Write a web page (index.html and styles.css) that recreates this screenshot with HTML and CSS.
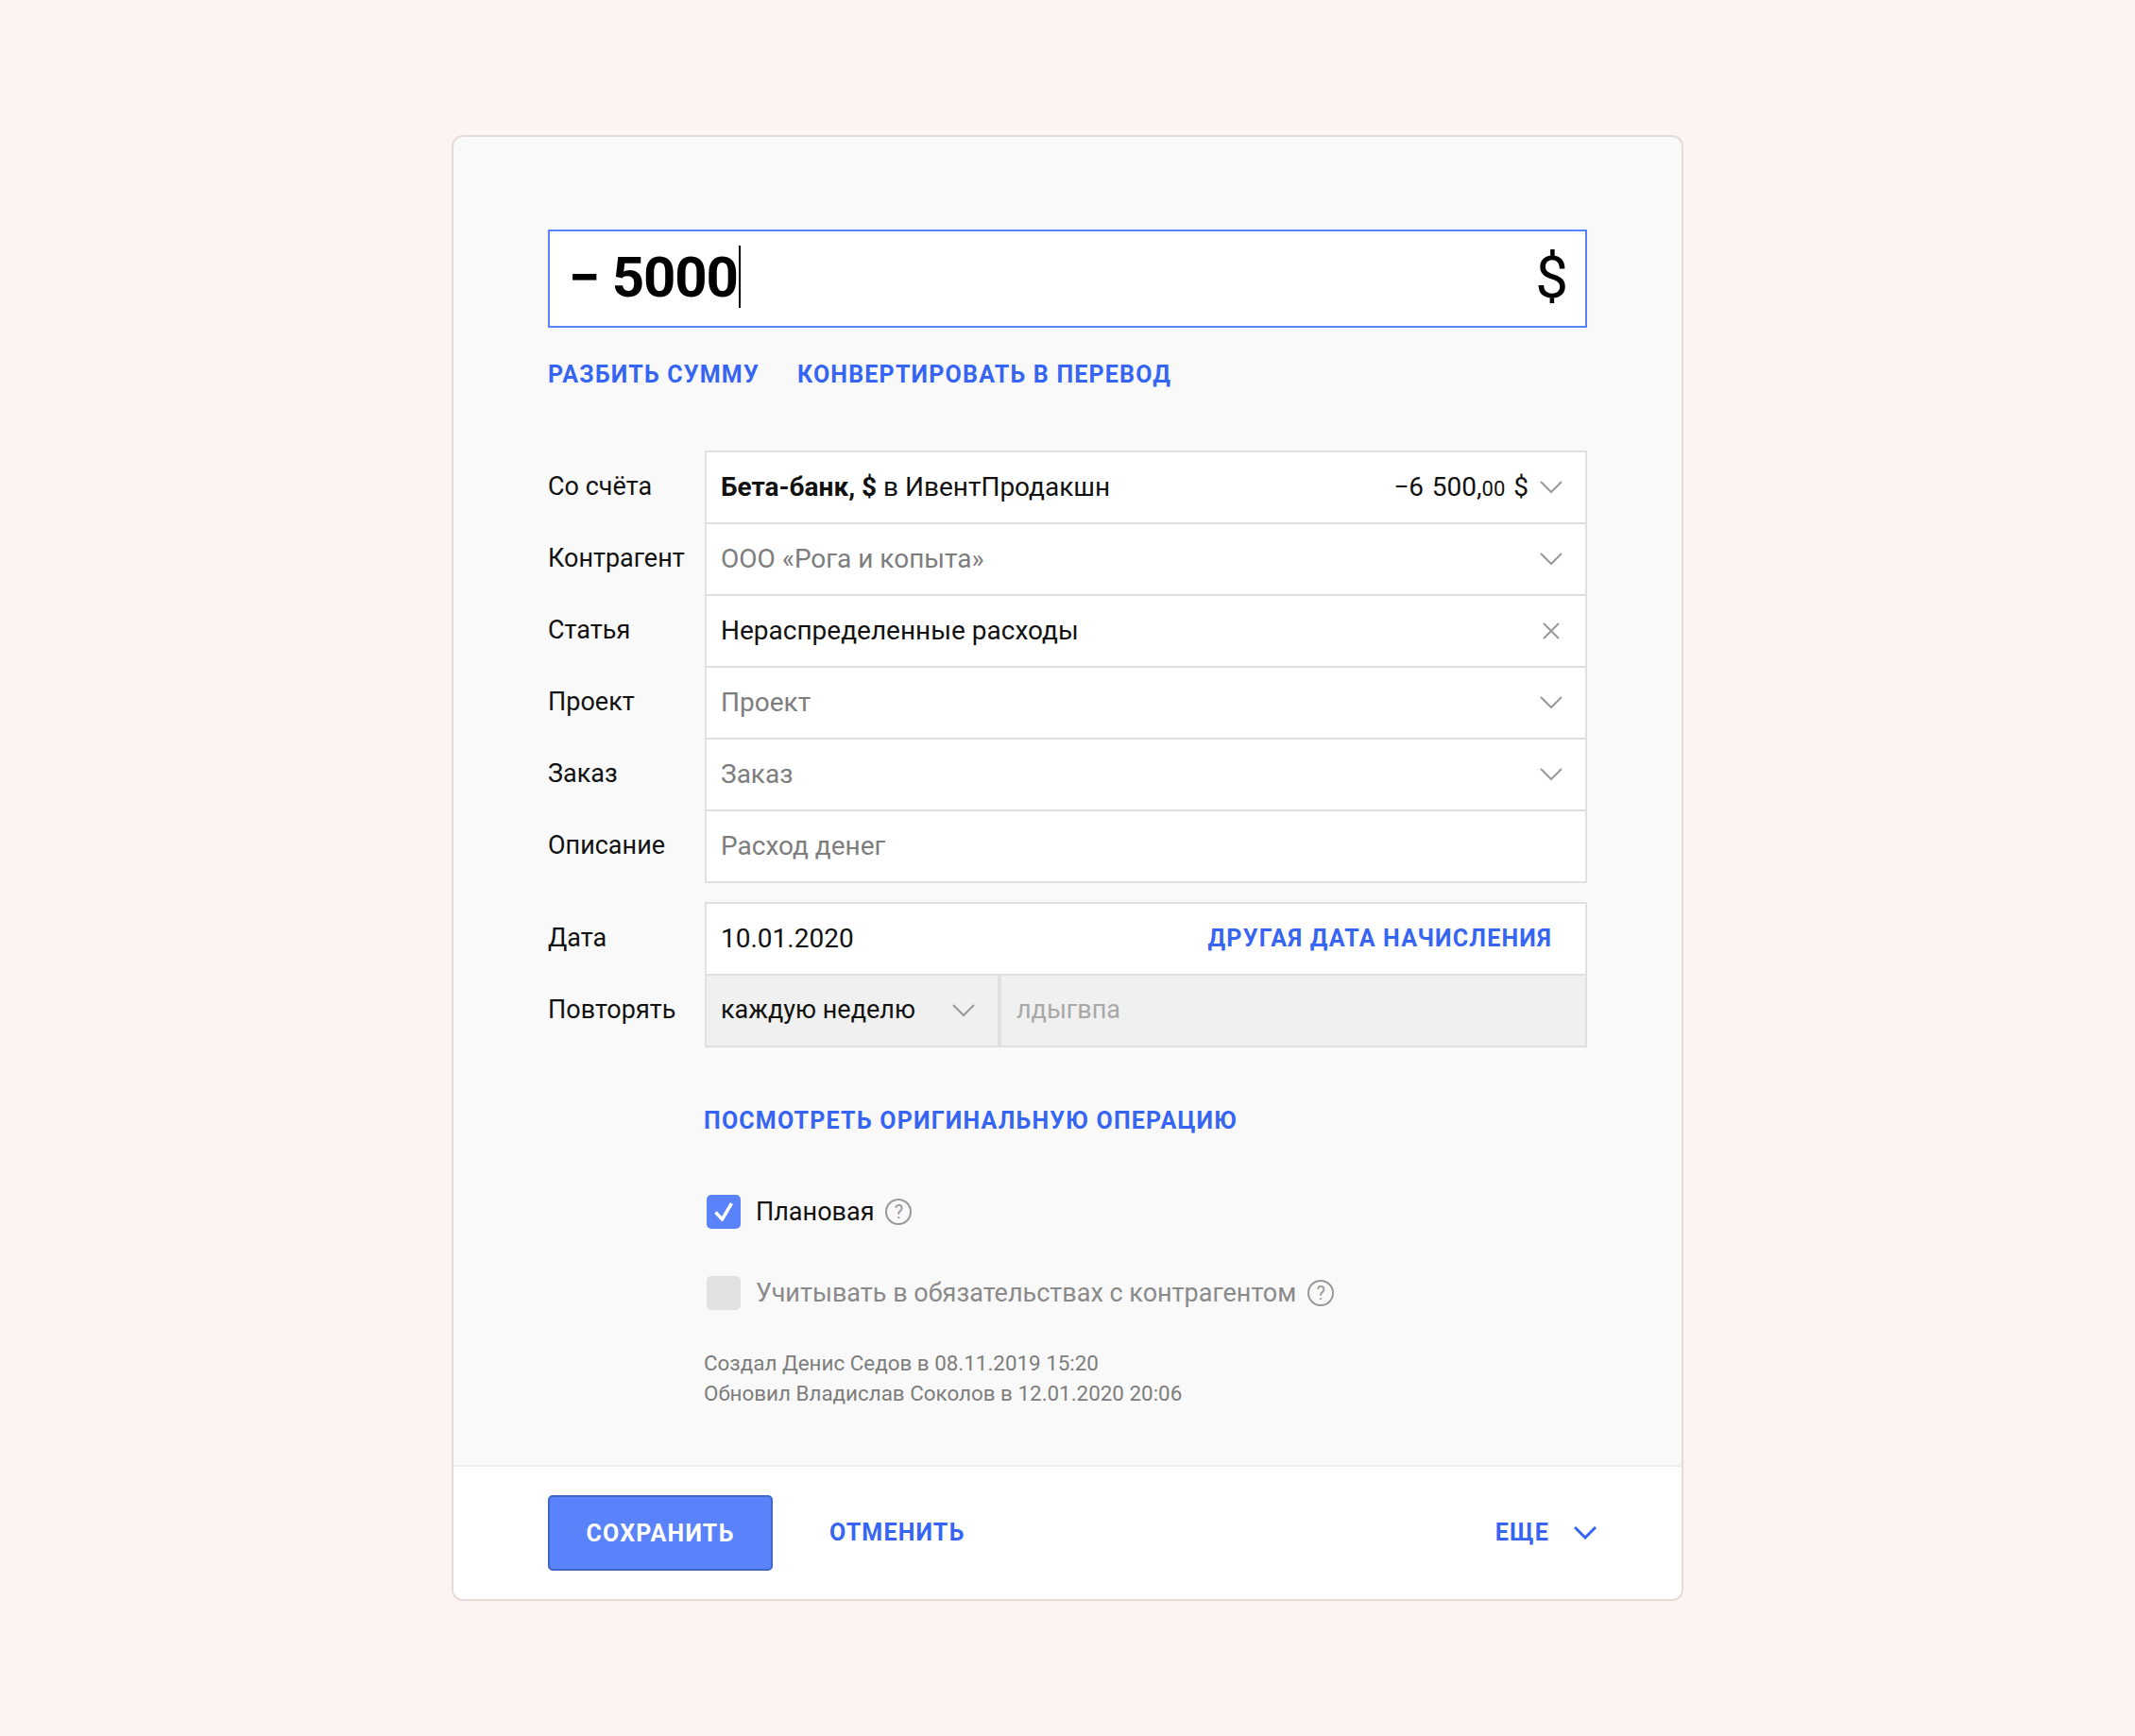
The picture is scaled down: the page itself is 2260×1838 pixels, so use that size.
FILE: index.html
```html
<!DOCTYPE html>
<html>
  <head>
    <meta charset="utf-8" />
    <title>Операция</title>
    <link rel="stylesheet" href="styles.css">
  </head>
  <body>
    <div class="card">
      <div class="card-body">
        <div class="amount">
          <span class="amount-value">&minus; 5000<span class="caret"></span></span>
          <span class="amount-cur">$</span>
        </div>
        <div class="links">
          <a class="link">Разбить сумму</a>
          <a class="link">Конвертировать в перевод</a>
        </div>

        <div class="rows">
          <div class="row">
            <label>Со счёта</label>
            <div class="field">
              <span class="val"><b>Бета-банк, $</b> в ИвентПродакшн</span>
              <span class="sum">−6 500,<small>00</small> $</span>
              <svg class="chev" viewBox="0 0 24 14"><path d="M1 1l11 11L23 1"/></svg>
            </div>
          </div>
          <div class="row">
            <label>Контрагент</label>
            <div class="field">
              <span class="val muted">ООО «Рога и копыта»</span>
              <svg class="chev" viewBox="0 0 24 14"><path d="M1 1l11 11L23 1"/></svg>
            </div>
          </div>
          <div class="row">
            <label>Статья</label>
            <div class="field">
              <span class="val">Нераспределенные расходы</span>
              <svg class="cross" viewBox="0 0 18 18"><path d="M1 1l16 16M17 1L1 17"/></svg>
            </div>
          </div>
          <div class="row">
            <label>Проект</label>
            <div class="field">
              <span class="val muted">Проект</span>
              <svg class="chev" viewBox="0 0 24 14"><path d="M1 1l11 11L23 1"/></svg>
            </div>
          </div>
          <div class="row">
            <label>Заказ</label>
            <div class="field">
              <span class="val muted">Заказ</span>
              <svg class="chev" viewBox="0 0 24 14"><path d="M1 1l11 11L23 1"/></svg>
            </div>
          </div>
          <div class="row">
            <label>Описание</label>
            <div class="field">
              <span class="val muted">Расход денег</span>
            </div>
          </div>
        </div>

        <div class="rows rows-date">
          <div class="row">
            <label>Дата</label>
            <div class="field">
              <span class="val">10.01.2020</span>
              <a class="link link-date">Другая дата начисления</a>
            </div>
          </div>
          <div class="row">
            <label>Повторять</label>
            <div class="field field-split">
              <div class="period">
                <span class="val">каждую неделю</span>
                <svg class="chev" viewBox="0 0 24 14"><path d="M1 1l11 11L23 1"/></svg>
              </div>
              <div class="period-value">лдыгвпа</div>
            </div>
          </div>
        </div>

        <div class="extra">
          <a class="link">Посмотреть оригинальную операцию</a>
          <div class="check check-first">
            <span class="box box-on">
              <svg viewBox="0 0 20 20"><path d="M1.500 10.500l7 7.500L18.500 1"/></svg>
            </span>
            <span class="check-text">Плановая</span>
            <span class="hint">?</span>
          </div>
          <div class="check check-off">
            <span class="box"></span>
            <span class="check-text">Учитывать в обязательствах с контрагентом</span>
            <span class="hint">?</span>
          </div>
          <div class="meta">
            Создал Денис Седов в 08.11.2019 15:20<br>
            Обновил Владислав Соколов в 12.01.2020 20:06
          </div>
        </div>
      </div>

      <div class="card-foot">
        <button class="btn">Сохранить</button>
        <a class="link link-cancel">Отменить</a>
        <a class="link link-more">Еще
          <svg class="chev chev-blue" viewBox="0 0 24 14"><path d="M1 1l11 11L23 1"/></svg>
        </a>
      </div>
    </div>
  </body>
</html>
```

FILE: styles.css
```css
* {
  box-sizing: border-box;
}
body {
  margin: 0;
  height: 1838px;
  background: #fdf3f1;
  font-family: Roboto, "Noto Sans", sans-serif;
  font-size: 28px;
  color: #111;
  padding-top: 143px;
}
.card {
  width: 1304px;
  height: 1552px;
  margin-left: 478px;
  background: #f9f9f9;
  border: 2px solid #e4dbd8;
  border-radius: 12px;
  display: flex;
  flex-direction: column;
  overflow: hidden;
}
.card-body {
  flex: 1;
  padding: 98px 100px 0;
}
.amount {
  height: 104px;
  background: #fff;
  border: 2px solid #5982fb;
  display: flex;
  align-items: center;
  justify-content: space-between;
  padding: 0 18px 4px 20px;
  font-size: 60px;
  color: #000;
}
.amount-value {
  font-weight: 700;
  letter-spacing: -1.2px;
  display: flex;
  align-items: center;
  white-space: pre;
}
.caret {
  width: 2px;
  height: 66px;
  margin-left: 1px;
  background: #000;
}
.amount-cur {
  font-size: 62px;
}
.links {
  display: flex;
  gap: 40px;
  margin-top: 33px;
}
.link {
  color: #3565f2;
  font-size: 25px;
  font-weight: 700;
  letter-spacing: 1.2px;
  text-transform: uppercase;
  line-height: 34px;
}
.rows {
  margin-top: 63px;
}
.rows-date {
  margin-top: 20px;
}
.row {
  display: flex;
  align-items: center;
  margin-top: -2px;
}
.row:first-child {
  margin-top: 0;
}
.row label {
  width: 166px;
  font-size: 27px;
  padding-bottom: 2px;
}
.field {
  flex: 1;
  height: 78px;
  background: #fff;
  border: 2px solid #e0e0e0;
  display: flex;
  align-items: center;
  padding: 0 24px 0 15px;
}
.val {
  flex: 1;
  padding-bottom: 2px;
}
.muted {
  color: #7d7d7d;
}
.sum {
  margin-right: 12px;
  padding-bottom: 2px;
  word-spacing: 2px;
}
.sum small {
  font-size: 22px;
}
.chev {
  width: 24px;
  height: 14px;
  fill: none;
  stroke: #999;
  stroke-width: 2;
}
.cross {
  width: 18px;
  height: 18px;
  margin-right: 3px;
  fill: none;
  stroke: #999;
  stroke-width: 2;
}
.link-date {
  margin-right: 11px;
}
.field-split {
  padding: 0;
  background: #f0f0f0;
}
.period {
  width: 312px;
  height: 100%;
  display: flex;
  align-items: center;
  padding: 0 24px 0 15px;
  border-right: 4px solid #e0e0e0;
  font-size: 27px;
}
.period-value {
  flex: 1;
  padding: 0 0 2px 16px;
  color: #a8a8a8;
  font-size: 27px;
}
.extra {
  padding-left: 165px;
  margin-top: 60px;
}
.check {
  display: flex;
  align-items: center;
  gap: 16px;
  padding-left: 3px;
  margin-top: 50px;
  height: 36px;
}
.check-first {
  margin-top: 61px;
}
.check-text {
  font-size: 27px;
}
.box {
  width: 36px;
  height: 36px;
  border-radius: 5px;
  background: #e2e2e2;
  display: flex;
  align-items: center;
  justify-content: center;
}
.box-on {
  background: #5982fb;
}
.box-on svg {
  width: 20px;
  height: 20px;
  fill: none;
  stroke: #fff;
  stroke-width: 3.500;
}
.hint {
  width: 28px;
  height: 28px;
  margin-left: -4px;
  border: 2px solid #999;
  border-radius: 50%;
  color: #999;
  font-size: 20px;
  line-height: 24px;
  text-align: center;
}
.check-off {
  color: #8a8a8a;
}
.meta {
  margin-top: 40px;
  font-size: 22.400px;
  line-height: 32px;
  color: #7d7d7d;
}
.card-foot {
  height: 142px;
  background: #fff;
  border-top: 2px solid #eeeeee;
  display: flex;
  align-items: center;
  padding: 0 90px 0 100px;
}
.btn {
  width: 238px;
  height: 80px;
  background: #5982fb;
  border: 2px solid #4066c8;
  border-radius: 5px;
  color: #fff;
  font-family: inherit;
  font-size: 25px;
  font-weight: 700;
  letter-spacing: 1.200px;
  text-transform: uppercase;
}
.link-cancel {
  margin-left: 60px;
}
.link-more {
  margin-left: auto;
  display: flex;
  align-items: center;
  gap: 26px;
}
.chev-blue {
  stroke: #3565f2;
  stroke-width: 3;
}
```
